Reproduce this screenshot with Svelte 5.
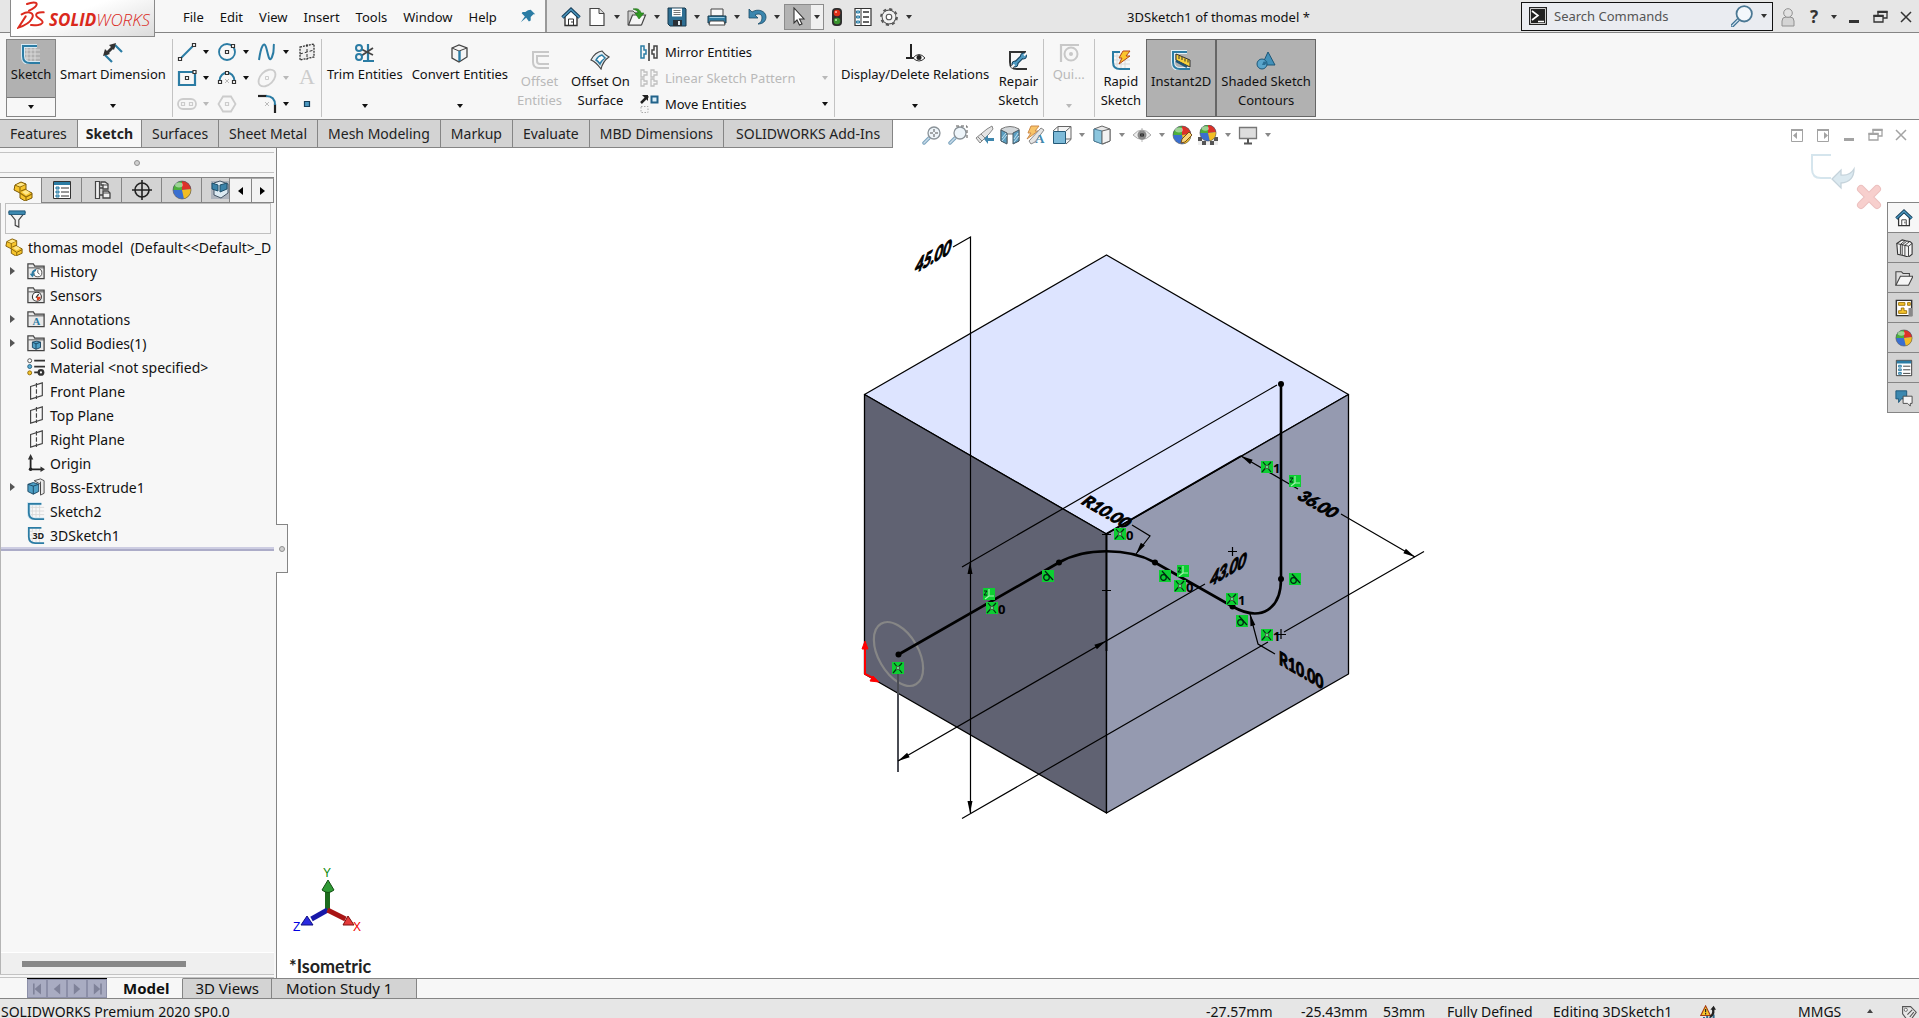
<script lang="ts">
	type Cmd = { icon: string; lines: string[]; menu?: boolean; off?: boolean; on?: boolean };
	type Node = { icon: string; label: string; open?: boolean };

	const B = '#2b7ca4';
	const K = '#333';

	const ball =
		'<circle cx="10" cy="10" r="9" fill="#3a6fd0"/><path d="M10 10V1a9 9 0 0 0-9 9z" fill="#4caf3c"/><path d="M10 10V1a9 9 0 0 1 9 8z" fill="#dc3228"/><path d="M10 10l9-1a9 9 0 0 1-7 10z" fill="#f3bd22"/><circle cx="10" cy="10" r="9" fill="none" stroke="#555" stroke-opacity=".6"/><ellipse cx="7" cy="5" rx="4" ry="2.4" fill="#fff" opacity=".45"/>';
	const folder =
		'<path d="M1 18.500V2h6l1.500 2.500H19v14z" fill="#e9e9e9" stroke="#444" stroke-width="1.400"/><path d="M1.500 6.500H19" stroke="#444"/>';
	const grid = '<path d="M6 3v15M10 3v15M14 3v15M3 6h16M3 10h16M3 14h16" stroke="#d9d9d9"/>';
	const plane =
		'<path d="M4 5l13-4v14L4 19z" fill="#f9f9f9" stroke="#444" stroke-width="1.300"/><path d="M10.500 1v18" stroke="#444" stroke-width="1.300" stroke-dasharray="5 2"/>';
	const part =
		'<path d="M1 9l1-5 6-3 5 2v6l6 3v5l-7 3-5-3v-5z" fill="#f7c52c" stroke="#7a5806"/><path d="M2 4l5 2v6M7 6l6-3M8 10l5-2M7 12l6 4 6-3M13 16v3" fill="none" stroke="#8f690a" stroke-width="1.100"/><path d="M3 4l5-2 4 1.500-5 2z" fill="#ffe88a"/><path d="M9 11l4-2 4 2.500-4 2.500z" fill="#ffe88a"/>';
	const list = `<path d="M1.500 1.500h17v17h-17z" fill="#fff" stroke="${K}"/><path d="M2 2h16v3H2z" fill="${B}"/><path d="M4 7h3v2H4zM4 11h3v2H4zM4 15h3v2H4z" fill="#9cc8de" stroke="${B}"/><path d="M9 8h8M9 12h8M9 16h8" stroke="${K}"/>`;
	const house = `<path d="M4 9v9.500h12V9l-6-6z" fill="#fff" stroke="${K}" stroke-width="1.400"/><path d="M7.500 18v-6h5v6M11 14v2" fill="none" stroke="${K}"/><path d="M1.500 10.500L10 2.500l8.500 8" fill="none" stroke="#173f5a" stroke-width="3.600"/><path d="M1.500 10.500L10 2.500l8.500 8" fill="none" stroke="#4b97bf" stroke-width="1.500"/>`;
	const lens =
		'<path d="M2 18l5-5" stroke="#7ba3bd" stroke-width="3.500" stroke-linecap="round"/><path d="M2 18l5-5" stroke="#c8dcea" stroke-width="1.500" stroke-linecap="round"/><circle cx="12" cy="8" r="6" fill="#eef5fa" stroke="#8a9298" stroke-width="1.300"/>';
	const offset = (c: string) =>
		`<path d="M19 2H3v10q0 6 6 6h10M19 6H7v5q0 3 3 3h9" fill="none" stroke="${c}" stroke-width="2"/>`;

	const icons: Record<string, string> = {
		pin: `<path d="M13 3l5 5-2 0-3 3 0 4-2 1-3-4-6 5 4.500-6.500-3.500-3.500 1-1.500 3 0 3-2z" fill="${B}"/>`,
		home: house,
		doc: '<path d="M3 1.500h9l5 5v12H3z" fill="#fdfdfd" stroke="#444" stroke-width="1.200"/><path d="M12 1.500v5h5" fill="#ddd" stroke="#444"/>',
		open: '<path d="M1 18V4h5l2 2h6v12z" fill="#ccc" stroke="#555"/><path d="M1.500 18l4-10h13l-4 10z" fill="#f5f5f5" stroke="#444" stroke-width="1.200"/><path d="M6 2c4-1 7 0 8 4l3 0-5 6-4-6h3c0-2-2-3-5-4z" fill="#2f9a22" stroke="#1d6b14" stroke-width=".6"/>',
		save: '<path d="M1 1h17l1 1v17H3l-2-2z" fill="#2f6f93" stroke="#16384c"/><path d="M5 1.500h10v8H5z" fill="#fff"/><path d="M6.500 3.500h7M6.500 5.500h7M6.500 7.500h7" stroke="#777"/><path d="M6 13h9v6H6z" fill="#2a3036"/><path d="M11 14h2v4h-2z" fill="#dfe8ee"/>',
		print: `<path d="M4 9V2h12v7z" fill="#f8f8f8" stroke="#444"/><path d="M1 9h18v7H1z" fill="#2f7da4" stroke="#17384b"/><path d="M3 14h14l1 4H2z" fill="#fff" stroke="#444"/><path d="M2.500 10.500h15" stroke="#9ccbe2"/>`,
		undo: '<path d="M2 2v9h9L8 8c4-2 7-1 7 3 0 3-2 5-4 6 5 0 8-3 8-7 0-6-8-9-14-5z" fill="#3b86ae" stroke="#1b4a66" stroke-width=".8"/>',
		cursor: '<path d="M6 1v15l3-3 2.500 5 2.500-1-2.500-5h4.500z" fill="#fff" stroke="#333" stroke-width="1.100"/>',
		traffic: '<rect x="5" y="1" width="10" height="18" rx="4" fill="#2d2d2d"/><circle cx="10" cy="6" r="3.300" fill="#dd3018"/><circle cx="10" cy="14" r="3.300" fill="#39932e"/><circle cx="9" cy="5" r="1" fill="#ffc0a8"/><circle cx="9" cy="13" r="1" fill="#c4eeb4"/>',
		options: `<path d="M2 1.500h16v17H2z" fill="#fff" stroke="${K}" stroke-width="1.200"/><path d="M8 2v16" stroke="${K}"/><path d="M3.500 4h3v2h-3zM3.500 9h3v2h-3zM3.500 14h3v2h-3z" fill="#9cc8de" stroke="${B}"/><path d="M10 5h6M10 10h6M10 15h6" stroke="${K}" stroke-width="1.300"/>`,
		gear: '<circle cx="10" cy="10" r="6.800" fill="none" stroke="#555" stroke-width="1.200"/><circle cx="10" cy="10" r="8" fill="none" stroke="#555" stroke-width="1.800" stroke-dasharray="3.140 3.140"/><circle cx="10" cy="10" r="6.300" fill="#f2f2f2"/><circle cx="10" cy="10" r="2.800" fill="#fff" stroke="#555" stroke-width="1.100"/>',
		prompt: '<path d="M1 1h18v18H1z" fill="#222"/><path d="M2.500 2.500h15v15h-15z" fill="none" stroke="#ccc"/><path d="M4 5l6 4.500L4 14M10 15.500h6" fill="none" stroke="#fff" stroke-width="1.600"/>',
		search: '<path d="M1 19l7-7" stroke="#3f7294" stroke-width="3.400" stroke-linecap="round"/><path d="M1 19l7-7" stroke="#cfe2ef" stroke-width="1.200" stroke-linecap="round"/><circle cx="12" cy="8" r="7" fill="#f3f7fb" stroke="#4b7894" stroke-width="1.600"/>',
		user: '<path d="M4 19v-5q0-4 4-4h4q4 0 4 4v5z" fill="#d4d4d4" stroke="#909090"/><circle cx="10" cy="6" r="4.300" fill="#e2e2e2" stroke="#909090"/>',
		min: '<path d="M5 13h10v3H5z" fill="currentColor"/>',
		restore: '<path d="M8 9V4.500h9V11h-4M4 8.500h9v6.500H4z" fill="none" stroke="currentColor" stroke-width="1.300"/><path d="M7.500 5h10M3.500 9h10" stroke="currentColor" stroke-width="2"/>',
		close: '<path d="M5 5l10 10M15 5L5 15" stroke="currentColor" stroke-width="1.500"/>',
		paneL: '<path d="M4.500 4.500h11v12h-11z" fill="none" stroke="currentColor"/><path d="M4 4h12v2H4zM10 7v7l-4-3.500z" fill="currentColor"/>',
		paneR: '<path d="M4.500 4.500h11v12h-11z" fill="none" stroke="currentColor"/><path d="M4 4h12v2H4zM11 7v7l4-3.500z" fill="currentColor"/>',
		sketch: `${grid}<path d="M16 2H2v10q0 7 7 7h10" fill="none" stroke="#d7e9f3" stroke-width="4"/><path d="M16 2H2v10q0 7 7 7h10" fill="none" stroke="${B}" stroke-width="2"/>`,
		smartdim: `<path d="M2 12l7 7M12 2l7 7" stroke="${B}" stroke-width="2.200"/><path d="M3 11L11 3" stroke="${K}" stroke-width="3"/><path d="M0 13l2-7 5 5zM13 0l-2 7-5-5z" fill="${K}"/>`,
		line: `<path d="M3 17L17 3" stroke="${B}" stroke-width="2"/><path d="M1.500 15.500h3v3h-3zM15.500 1.500h3v3h-3z" fill="#fff" stroke="${K}" stroke-width="1.200"/>`,
		circle: `<circle cx="10" cy="10" r="8" fill="none" stroke="${B}" stroke-width="1.800"/><path d="M8.500 8.500h3v3h-3zM14.500 2.500h3v3h-3z" fill="#fff" stroke="${K}" stroke-width="1.200"/>`,
		spline: `<path d="M2 18C4 4 7-1 9 5s3 17 6 10 1-9 2-13" fill="none" stroke="${B}" stroke-width="2"/>`,
		sketchplane: `<path d="M3 5l14-3v13L3 18z" fill="#efefef" stroke="${K}" stroke-width="1.300" stroke-dasharray="2 1"/><path d="M10 2v16M3 12l14-4" stroke="${K}" stroke-dasharray="3 2"/>`,
		rect: `<path d="M2 4h16v13H2z" fill="none" stroke="${B}" stroke-width="2.200"/><path d="M8.500 8.500h3v3h-3zM16 2.500h3v3h-3z" fill="#fff" stroke="${K}" stroke-width="1.200"/>`,
		arc: `<path d="M2.500 13C3 2 17 2 17.500 13" fill="none" stroke="${B}" stroke-width="2"/><path d="M1.500 12.500h3v3h-3zM15.500 12.500h3v3h-3zM8.500 3.500h3v3h-3z" fill="#fff" stroke="${K}" stroke-width="1.200"/><path d="M8 11l4 4M12 11l-4 4" stroke="#bbb"/>`,
		ellipse: '<ellipse cx="10" cy="10" rx="10" ry="6.500" transform="rotate(-45 10 10)" fill="none" stroke="#ccc" stroke-width="1.800"/><path d="M8.500 8.500h3v3h-3z" fill="none" stroke="#ccc"/>',
		slot: '<rect x="1" y="5" width="18" height="10" rx="5" fill="none" stroke="#ccc" stroke-width="1.800"/><path d="M4.500 8.500h3v3h-3zM12.500 8.500h3v3h-3z" fill="none" stroke="#ccc" stroke-width="1.200"/>',
		polygon: '<path d="M6 2.500h8l4.500 7.500-4.500 7.500H6L1.500 10z" fill="none" stroke="#ccc" stroke-width="1.800"/><path d="M8.500 8.500h3v3h-3z" fill="none" stroke="#ccc" stroke-width="1.200"/>',
		fillet: `<path d="M1 2h9" stroke="#222" stroke-width="2.200"/><path d="M18 10v9" stroke="#222" stroke-width="2.200"/><path d="M9 2q9 0 9 9" fill="none" stroke="${B}" stroke-width="2"/><path d="M8 8l4 4M12 8l-4 4" stroke="#bbb"/>`,
		point: '<path d="M7.500 7.500h5v5h-5z" fill="#4b97bf" stroke="#173f5a" stroke-width="1.200"/>',
		trim: `<path d="M13 1v17M8 18h11" stroke="${B}" stroke-width="2.200"/><path d="M6 6l12 6M6 13l12-8" stroke="#444" stroke-width="1.800"/><circle cx="4" cy="5" r="3" fill="none" stroke="${B}" stroke-width="2"/><circle cx="4" cy="14" r="3" fill="none" stroke="${B}" stroke-width="2"/>`,
		convert: `<path d="M2 5l7-3 8 3v9l-8 5-7-4z" fill="#f4f4f4" stroke="#444" stroke-width="1.300"/><path d="M2 5l7 3 8-3" fill="none" stroke="#444"/><path d="M9.500 8v10" stroke="${B}" stroke-width="2.400"/>`,
		offset: offset('#c8c8c8'),
		surface: `<path d="M1 10Q5 2 12 1q3 4 7 6-6 4-8 12Q6 12 1 10z" fill="#e6eef3" stroke="#444" stroke-width="1.200"/><path d="M6 10q2-4 6-5l3 3q-4 3-5 6-2-3-4-4z" fill="#fff" stroke="${B}" stroke-width="1.500"/>`,
		mirror: `<path d="M10 1v18" stroke="${K}" stroke-width="1.500"/><path d="M2 4h3v4h2v4H5v4H2z" fill="none" stroke="${B}" stroke-width="1.500"/><path d="M18 4h-3v4h-2v4h2v4h3z" fill="none" stroke="#444" stroke-width="1.500"/>`,
		pattern: '<path d="M2 2h3v2h3v3H5v2H2zM12 2h3v2h3v3h-3v2h-3zM2 11h3v2h3v3H5v2H2zM12 11h3v2h3v3h-3v2h-3z" fill="none" stroke="#c0c0c0" stroke-width="1.300"/>',
		move: `<path d="M2 9l7-7" stroke="#222" stroke-width="2.500"/><path d="M3 1h6v6z" fill="#222"/><path d="M12.500 2.500h6v6h-6z" fill="#d9eef9" stroke="#22638a" stroke-width="2"/><path d="M2 12.500h7v6H2z" fill="none" stroke="#aaa" stroke-dasharray="1.500 1.500"/>`,
		relations: '<path d="M6 1v14M1 15h8" stroke="#222" stroke-width="2"/><path d="M8 15q6-7 12 0-6 6-12 0z" fill="#fff" stroke="#333"/><circle cx="14" cy="14.500" r="2.500" fill="#222"/>',
		repair: `<path d="M18 2H2v10q0 7 7 7h10" fill="none" stroke="${K}" stroke-width="2"/><path d="M7 14l8-8" stroke="#17435f" stroke-width="4.500"/><circle cx="7" cy="14" r="3" fill="#4f9ac2" stroke="#17435f"/><circle cx="15.500" cy="6" r="3" fill="#4f9ac2" stroke="#17435f"/><path d="M7 14l8-8" stroke="#4f9ac2" stroke-width="2.200"/><path d="M16 5.500l3-3M6.500 14.500l-3 3" stroke="#f7f7f7" stroke-width="2"/>`,
		snaps: '<path d="M2 19V2h18" fill="none" stroke="#c8c8c8" stroke-width="2.200"/><circle cx="12" cy="11" r="6.500" fill="none" stroke="#c8c8c8" stroke-width="2"/><circle cx="12" cy="11" r="2" fill="#c8c8c8"/>',
		rapid: `${grid}<path d="M9 2H2v10q0 7 7 7h10" fill="none" stroke="${B}" stroke-width="2"/><path d="M12 1h7l-4 5h4L8 14l3-6H8z" fill="#fbc52b" stroke="#b5461c"/>`,
		instant: `<path d="M16 2H2v10q0 7 7 7h10" fill="none" stroke="#e3eff6" stroke-width="4"/><path d="M16 2H2v10q0 7 7 7h10" fill="none" stroke="${B}" stroke-width="2"/><path d="M5 4l14 6v7L5 10z" fill="#f7d23b" stroke="#333"/><path d="M8 6v3M11 7v3M14 8.500v3M17 9.500v3" stroke="#333"/><path d="M5 11l11 6" stroke="#1d5677" stroke-width="2"/>`,
		shaded: `<path d="M12 2l7 13H6z" fill="#4391b9" stroke="#1d5677"/><circle cx="6" cy="14" r="5" fill="#5aa5cb" stroke="#1d5677"/><path d="M7.500 11.500l4 .2-2.500 3.300h-3z" fill="#2b6f95"/>`,
		zoomfit: lens + '<path d="M12 4v8M8 8h8" stroke="#555" stroke-dasharray="3 2"/>',
		zoomarea: lens + '<path d="M8 1h11v13" fill="none" stroke="#555" stroke-dasharray="3 2"/>',
		prevview: `<path d="M2 13L13 4l5-3 1 3-4 5-9 9z" fill="#e4e4e4" stroke="#888"/><path d="M7 9l4 4M4 12l4 4" stroke="#888"/><path d="M10 14l4-4v3h6v3h-6v3z" fill="#3f87ad"/>`,
		section: `<path d="M1 4q9-5 18 0v12l-5 2V9H7v9l-6-2z" fill="#d3d7da" stroke="#777"/><path d="M1 5l6 3v11l-6-3zM13 8l6-3v11l-6 3z" fill="#5a9fc2" stroke="#4a5a64"/><path d="M2 13l4-5M2 16l5-6M14 14l4-6M14 17l5-6" stroke="#c5e0ee"/>`,
		annot: '<path d="M5 1h8L9 6h3L1 14l4-6H2z" fill="#f8c468" stroke="#cc8a4a"/><path d="M3 16L15 3l3 2-9 12-4 2z" fill="#e4e4e4" stroke="#888"/><text x="9" y="18" font-family="Liberation Serif, serif" font-weight="700" font-size="13" fill="#3f87ad">A</text>',
		orient: '<path d="M6 1.500h13v13L14 19M6 1.500L1 6M19 1.500L14 6M6 2v5M6 14h13" fill="#f4f4f4" stroke="#666"/><path d="M1.500 6.500h12v12h-12z" fill="#7dbad8" stroke="#245a78"/>',
		display: '<path d="M2 4l8-3 8 3v12l-7 3-9-3z" fill="#e8e8e8" stroke="#666"/><path d="M2 4l8 2v13l-8-3z" fill="#8cc6de" stroke="#4b7d98"/><path d="M10 6l8-2v12l-8 3z" fill="#f2f2f2" stroke="#666"/>',
		eye: '<path d="M1 10q9-10 18 0-9 9-18 0z" fill="#eee" stroke="#aaa"/><circle cx="10" cy="10" r="4.500" fill="#888"/><circle cx="10" cy="10" r="2" fill="#222"/><path d="M10 3v14" stroke="#999" stroke-width=".7"/>',
		appear: ball + '<path d="M9 18l1-4 7-7 3 3-7 7z" fill="#f8d67a" stroke="#7a4d18"/>',
		scene: '<path d="M0 12h20v8H0z" fill="#eee"/><path d="M0 12h4v4H0zM8 12h4v4H8zM16 12h4v4h-4zM4 16h4v4H4zM12 16h4v4h-4z" fill="#555"/><g transform="translate(1 -1) scale(.9)">' + ball + '</g>',
		monitor: '<path d="M1.500 2.500h17v11h-17z" fill="#ddd" stroke="#777" stroke-width="1.300"/><path d="M10 14v4M6 18.500h8" stroke="#555" stroke-width="2"/>',
		part,
		list,
		config: '<path d="M3.500 1.500h4v17h-4z" fill="#eee" stroke="#444" stroke-width="1.200"/><path d="M7 8h4M7 15h4" stroke="#444" stroke-width="1.500"/><path d="M9 2h4l3 2v5h-5V5H9zM11 11h5l2 2v5h-7z" fill="#eee" stroke="#444" stroke-width="1.300"/><path d="M11 5h5M11 13h7" stroke="#444"/>',
		target: '<circle cx="10" cy="10" r="7" fill="none" stroke="#222" stroke-width="1.600"/><path d="M10 0v20M0 10h20" stroke="#222" stroke-width="1.600"/>',
		ball,
		cam: '<path d="M1 1h18v18H1z" fill="#aeb4bd"/><path d="M4 3l6-2 8 3v9l-7 5-7-3z" fill="#dceaf2" stroke="#456"/><path d="M2 3l6 2v6L2 9zM10 5l7-2v6l-7 3z" fill="#3b83a9" stroke="#1e4e69"/>',
		funnel: `<path d="M1.500 3h17l-6.500 8v8l-4-2v-6z" fill="#f2f2f2" stroke="#444" stroke-width="1.300"/><path d="M1 1h18v4H1z" fill="#3c88af" stroke="#1d5677"/>`,
		history: folder + `<circle cx="12" cy="12" r="4.500" fill="#fff" stroke="#444"/><path d="M12 9v3l2 1.500" fill="none" stroke="#444"/><path d="M10 8q-5 1-5 5H3l3 4 3-4H7q0-2 3-3z" fill="${B}"/>`,
		sensors: folder + '<circle cx="11" cy="12" r="5" fill="#fff" stroke="#333" stroke-width="1.200"/><path d="M10 13l3-4" stroke="#333" stroke-width="1.500"/><path d="M11 12h4q0 4-4 4z" fill="#e0401f"/>',
		annotations: folder + `<text x="6" y="17" font-family="Liberation Serif, serif" font-weight="700" font-size="12" fill="${B}">A</text>`,
		bodies: folder + '<path d="M6 9l5-1 4 1v6l-5 2-4-2z" fill="#4ea0c6" stroke="#17435f"/><path d="M6 9l4 2 5-2M10 11v6" fill="none" stroke="#17435f"/>',
		material: '<path d="M8 3h12M8 9.500h12M8 16h6" stroke="#333" stroke-width="1.900"/><circle cx="3" cy="3" r="2.200" fill="#fff" stroke="#444"/><circle cx="3" cy="9.500" r="2.200" fill="#5ab0d8" stroke="#245a78"/><circle cx="3" cy="16.500" r="2.200" fill="#f5c52b" stroke="#8a6508"/><circle cx="15.500" cy="16" r="3.800" fill="#333"/><circle cx="15.500" cy="16" r="1.200" fill="#fff"/>',
		plane,
		origin: '<path d="M4 3v14h13" fill="none" stroke="#222" stroke-width="2"/><path d="M1 6l3-6 3 6zM15 14l5 3-5 3z" fill="#333"/><circle cx="4" cy="17" r="2" fill="#222"/>',
		extrude: '<path d="M8 3l7-2 4 2v14l-4 2V7z" fill="#e9e9e9" stroke="#444"/><path d="M15 4v14" stroke="#444"/><path d="M1 7l6-2 6 2v8l-6 3-6-3z" fill="#4ea0c6" stroke="#17435f"/><path d="M1 7l6 2 6-2M7 9v9" fill="none" stroke="#17435f"/>',
		sketch3d: `${grid}<path d="M16 2H2v10q0 7 7 7h10" fill="none" stroke="${B}" stroke-width="2"/><path d="M6 6h13v9H6z" fill="#f7f7f7"/><text x="6" y="14" font-family="Noto Sans, sans-serif" font-weight="700" font-size="10" fill="#222">3D</text>`,
		books: '<path d="M2 5l6-4 4 1 5 1 2 2v12l-4 3-4-1-3-1-5-1z" fill="#f3f3f3" stroke="#333" stroke-width="1.200"/><path d="M2 5l4 1v11M6 6l5-4M8 6.500l5-4M8 6v12M11 7l5-4M11 7v12M15 8l4-3M15 8v11M6 6l9 2" fill="none" stroke="#333"/>',
		folderopen: '<path d="M1 18V3h6l2 2h7v4" fill="#ddd" stroke="#444" stroke-width="1.200"/><path d="M1 18L6 8h14l-5 10z" fill="#f5f5f5" stroke="#444" stroke-width="1.200"/>',
		palette: '<path d="M1.500 1.500h17v17h-17z" fill="#fff" stroke="#333" stroke-width="1.600"/><path d="M4 4h7v3H4zM14 4h3v3h-3zM4 13h3v-3h3v3h3v3H4z" fill="#f7c52c" stroke="#9a7208"/><path d="M15 10h4v9h-4z" fill="#888"/>',
		forum: `<path d="M1 2h12v9H7l-3 4v-4H1z" fill="#3c88af" stroke="#1d5677"/><path d="M9 8h10v8h-2v3l-3-3H9z" fill="#f4f4f4" stroke="#444"/>`,
		rebuild: '<path d="M5 15v4M9 13v6M13 15v4M17 12v7" stroke="#2d6b90" stroke-width="2.500"/><path d="M7 1l6 12H1z" fill="#f8c52c" stroke="#a33a12" stroke-width="1.300"/><path d="M7 5v4M7 10v2" stroke="#222" stroke-width="1.500"/><path d="M12 14q4-3 3-8h-2l4-5 3 5h-2q1 8-6 10z" fill="#222"/>',
		tag: '<path d="M2 2l10 0 7 7-7 10-4 0-6-8z" fill="#e8e8e8" stroke="#555" stroke-width="1.400"/><circle cx="6" cy="6" r="2" fill="#fff" stroke="#555"/><path d="M8 12l6-6M11 15l5-6" stroke="#555" stroke-width="1.400"/>',
		first: '<path d="M6 3v14" stroke="currentColor" stroke-width="2"/><path d="M15 3v14l-8-7z" fill="currentColor"/>',
		prev: '<path d="M14 3v14l-8-7z" fill="currentColor"/>',
		next: '<path d="M6 3v14l8-7z" fill="currentColor"/>',
		last: '<path d="M15 3v14" stroke="currentColor" stroke-width="2"/><path d="M6 3v14l8-7z" fill="currentColor"/>'
	};

	const menus = ['File', 'Edit', 'View', 'Insert', 'Tools', 'Window', 'Help'];
	const quick = ['home', 'doc', '|', 'open', '|', 'save', '|', 'print', '|', 'undo', '|'];
	const headsUp = [
		'zoomfit', 'zoomarea', 'prevview', 'section', 'annot', 'orient', '|', 'display', '|',
		'eye', '|', 'appear', 'scene', '|', 'monitor', '|'
	];
	const shapes = [
		['line', 'circle', 'spline', 'sketchplane'],
		['rect', 'arc', 'ellipse', 'text'],
		['slot', 'polygon', 'fillet', 'point']
	];
	const noMenu = ['sketchplane', 'text', 'point', 'polygon'];
	const disabled = ['ellipse', 'text', 'slot', 'polygon'];

	const edits: Cmd[] = [
		{ icon: 'trim', lines: ['Trim Entities'], menu: true },
		{ icon: 'convert', lines: ['Convert Entities'], menu: true },
		{ icon: 'offset', lines: ['Offset', 'Entities'], off: true },
		{ icon: 'surface', lines: ['Offset On', 'Surface'] }
	];
	const rows = [
		{ icon: 'mirror', label: 'Mirror Entities' },
		{ icon: 'pattern', label: 'Linear Sketch Pattern', off: true, menu: true },
		{ icon: 'move', label: 'Move Entities', menu: true }
	];
	const tabs = [
		'Features', 'Sketch', 'Surfaces', 'Sheet Metal', 'Mesh Modeling', 'Markup', 'Evaluate',
		'MBD Dimensions', 'SOLIDWORKS Add-Ins'
	];
	const tree: Node[] = [
		{ icon: 'history', label: 'History', open: true },
		{ icon: 'sensors', label: 'Sensors' },
		{ icon: 'annotations', label: 'Annotations', open: true },
		{ icon: 'bodies', label: 'Solid Bodies(1)', open: true },
		{ icon: 'material', label: 'Material <not specified>' },
		{ icon: 'plane', label: 'Front Plane' },
		{ icon: 'plane', label: 'Top Plane' },
		{ icon: 'plane', label: 'Right Plane' },
		{ icon: 'origin', label: 'Origin' },
		{ icon: 'extrude', label: 'Boss-Extrude1', open: true },
		{ icon: 'sketch', label: 'Sketch2' },
		{ icon: 'sketch3d', label: '3DSketch1' }
	];

	// sketch relation flags: x, y, kind, index
	const flags: [number, number, string, string][] = [
		[1261, 461, 'x', '1'],
		[1289, 475, 'l', ''],
		[1114, 528, 'x', '0'],
		[1159, 570, 't', ''],
		[1177, 565, 'l', ''],
		[1174, 580, 'x', '0'],
		[1226, 593, 'x', '1'],
		[1236, 615, 't', ''],
		[1289, 573, 't', ''],
		[1261, 629, 'x', '1'],
		[1042, 570, 't', ''],
		[983, 588, 'l', ''],
		[986, 602, 'x', '0'],
		[892, 662, 'x', '']
	];
	// dimension arrow heads: x, y, angle
	const heads = [
		[970, 562, -90], [970, 813, 90], [1241, 456, 210], [1415, 557, 30],
		[898, 761, 150], [1106, 641, -30], [1136, 554, 125], [1250, 614, -104]
	];

	let activeTab = $state('Sketch');
</script>

{#snippet icon(name: string, size = 20)}
	<svg class="ico" width={size} height={size} viewBox="0 0 20 20" aria-hidden="true">{@html icons[name]}</svg>
{/snippet}

{#snippet caret()}
	<svg class="caret" width="6" height="4" viewBox="0 0 6 4" aria-hidden="true"><path d="M0 0h6L3 4z" fill="currentColor" /></svg>
{/snippet}

{#snippet tool(name: string)}
	{#if name === '|'}
		<button class="drop" aria-label="More">{@render caret()}</button>
	{:else}
		<button class="tool" aria-label={name}>{@render icon(name)}</button>
	{/if}
{/snippet}

{#snippet command(c: Cmd)}
	<button class="cmd" class:tall={!c.menu} class:on={c.on} disabled={c.off}>
		{@render icon(c.icon)}
		<span class="lbl">{#each c.lines as l}<span>{l}</span>{/each}</span>
		{#if c.menu}<span class="more">{@render caret()}</span>{/if}
	</button>
{/snippet}

<div class="app">
	<header class="title">
		<div class="brandbar">
			<div class="brand">
				<svg width="28" height="28" viewBox="48 4 84 84" aria-hidden="true">
					<g fill="none" stroke="#dc2a1e" stroke-linecap="round">
						<path d="M78 13C92 7 108 6 107 14 106 21 96 27 84 33" stroke-width="6" />
						<path d="M62 44C84 32 102 40 93 56 86 70 70 78 52 84L74 50" stroke-width="6" />
						<path d="M128 38C110 37 102 42 107 50 114 58 129 62 124 70 118 78 106 77 90 76" stroke-width="6" />
					</g>
				</svg>
				<span class="word"><b>SOLID</b><i>WORKS</i></span>
			</div>
			<nav class="menus">
				{#each menus as m}<button>{m}</button>{/each}
			</nav>
			<button class="tool pin" aria-label="Pin menu">{@render icon('pin', 18)}</button>
		</div>
		<div class="tools quick">
			{#each quick as q}{@render tool(q)}{/each}
			<span class="select">
				<button class="tool" aria-label="Select">{@render icon('cursor')}</button>
				<button class="drop" aria-label="Select options">{@render caret()}</button>
			</span>
			{#each ['traffic', 'options', 'gear', '|'] as q}{@render tool(q)}{/each}
		</div>
		<h1>3DSketch1 of thomas model *</h1>
		<div class="search">
			{@render icon('prompt')}
			<input type="text" placeholder="Search Commands" aria-label="Search Commands" />
			<button class="find" aria-label="Search">{@render icon('search', 22)}</button>
			<button class="drop" aria-label="Search scope">{@render caret()}</button>
		</div>
		<div class="tools win">
			{@render tool('user')}
			<button class="tool help" aria-label="Help">?</button>
			{@render tool('|')}
			{@render tool('min')}
			{@render tool('restore')}
			{@render tool('close')}
		</div>
	</header>

	<div class="ribbon">
		<div class="split">
			<button class="main">{@render icon('sketch')}<span>Sketch</span></button>
			<button class="more" aria-label="Sketch options">{@render caret()}</button>
		</div>
		{@render command({ icon: 'smartdim', lines: ['Smart Dimension'], menu: true })}
		<div class="shapes">
			{#each shapes as row}
				{#each row as s}
					<span class="cell">
						<button class="shape" aria-label={s} disabled={disabled.includes(s)}>
							{#if s === 'text'}<span class="glyph">A</span>{:else}{@render icon(s)}{/if}
						</button>
						{#if !noMenu.includes(s)}
							<button class="arrow" aria-label="{s} options" disabled={disabled.includes(s)}>{@render caret()}</button>
						{/if}
					</span>
				{/each}
			{/each}
		</div>
		<div class="group edits">
			{#each edits as c}{@render command(c)}{/each}
			<div class="rows">
				{#each rows as r}
					<button disabled={r.off}>
						{@render icon(r.icon)}<span>{r.label}</span>
						{#if r.menu}{@render caret()}{/if}
					</button>
				{/each}
			</div>
		</div>
		<div class="group rel">
			{@render command({ icon: 'relations', lines: ['Display/Delete Relations'], menu: true })}
			{@render command({ icon: 'repair', lines: ['Repair', 'Sketch'] })}
		</div>
		<div class="group qs">{@render command({ icon: 'snaps', lines: ['Qui...'], menu: true, off: true })}</div>
		<div class="rapid">{@render command({ icon: 'rapid', lines: ['Rapid', 'Sketch'] })}</div>
		{@render command({ icon: 'instant', lines: ['Instant2D'], on: true })}
		{@render command({ icon: 'shaded', lines: ['Shaded Sketch', 'Contours'], on: true })}
	</div>

	<div class="tabline">
		<div class="tabs" role="tablist">
			{#each tabs as t}
				<button role="tab" aria-selected={activeTab === t} class:active={activeTab === t} onclick={() => (activeTab = t)}>{t}</button>
			{/each}
		</div>
		<div class="tools view">{#each headsUp as h}{@render tool(h)}{/each}</div>
		<div class="tools doc">{#each ['paneL', 'paneR', 'min', 'restore', 'close'] as d}{@render tool(d)}{/each}</div>
	</div>

	<div class="work">
		<aside>
			<div class="grip"><i class="dot"></i></div>
			<div class="panes">
				{#each ['part', 'list', 'config', 'target', 'ball'] as p, i}
					<button class:active={i === 0} aria-label={p}>{@render icon(p)}</button>
				{/each}
				<button class="cut" aria-label="cam">{@render icon('cam')}</button>
				<button class="spin" aria-label="Scroll left"><svg width="5" height="8" viewBox="0 0 5 8"><path d="M5 0v8L0 4z" /></svg></button>
				<button class="spin" aria-label="Scroll right"><svg width="5" height="8" viewBox="0 0 5 8"><path d="M0 0v8l5-4z" /></svg></button>
			</div>
			<div class="treebox">
				<div class="filter">{@render icon('funnel', 18)}</div>
				<div class="root">{@render icon('part', 18)}<span>thomas model&nbsp; (Default&lt;&lt;Default&gt;_D</span></div>
				<ul>
					{#each tree as n}
						<li>
							<span class="exp">
								{#if n.open}<svg width="5" height="8" viewBox="0 0 5 8"><path d="M0 0v8l5-4z" fill="#555" /></svg>{/if}
							</span>
							{@render icon(n.icon, 18)}<span>{n.label}</span>
						</li>
					{/each}
				</ul>
				<div class="rollback"></div>
				<div class="hscroll"><i></i></div>
			</div>
			<div class="foot"></div>
			<button class="handle" aria-label="Collapse panel"><i class="dot"></i></button>
		</aside>

		<main>
			<svg class="scene" viewBox="277 148 1642 830">
				<g stroke="#000" stroke-width="1.300" stroke-linejoin="round">
					<path d="M1106.500 255l242 139.500-242 139.500-242-139.500z" fill="#dde4ff" />
					<path d="M864.500 394.500L1106.500 534v279L864.500 674z" fill="#606272" />
					<path d="M1348.500 394.500L1106.500 534v279l242-139z" fill="#959ab0" />
				</g>
				<ellipse cx="898.500" cy="654" rx="35" ry="20" transform="rotate(60 898.500 654)" fill="none" stroke="#868686" stroke-width="2.200" />
				<path d="M898 662v110" stroke="#4a4c54" stroke-width="2" />
				<g fill="none" stroke="#000" stroke-width="1.200">
					<path d="M953 247l17.500-10v576" />
					<path d="M962 567L1277 385M962 818.500L1268 642M1284 632l140-80.500" />
					<path d="M1241 456l57 33M1341 514l74 43M898 761L1205 584" />
					<path d="M1132 525l18 11-14 18M1275 654l-17-10-8-30" />
					<path d="M1228 551.500h9M1232.500 547v9M1276 634.500h10M1281 629v10M1102 534.500h9M1102 590.500h9" />
				</g>
				<path d="M1106.500 534v117M1106 534L1241 456" stroke="#000" stroke-width="1.800" />
				<path d="M898.500 654.500L1059 562.500C1085 547.500 1128 547.500 1155 562.500L1232.500 606.500C1262 623 1281 608 1281 579V384" fill="none" stroke="#000" stroke-width="2.600" />
				{#each [[898.500, 654.500], [1059, 562.500], [1155, 562.500], [1232.500, 606.500], [1281, 579], [1281, 384]] as [x, y]}
					<circle cx={x} cy={y} r="3" />
				{/each}
				{#each heads as [x, y, a]}
					<path d="M0 0l-12-2.500v5z" transform="translate({x} {y}) rotate({a})" />
				{/each}
				<g fill="#f00" stroke="#f00">
					<path d="M865 646v28l8 4" fill="none" stroke-width="2" />
					<path d="M865 641l3 8h-6zM879 682l-9-1 3-5z" />
				</g>
				{#each flags as [x, y, kind, n]}
					<g transform="translate({x} {y})">
						<rect width="12" height="12" fill="#0dce32" />
						{#if kind === 'x'}
							<path d="M2 1l8 10M10 1L1 11" stroke="#031" stroke-width="1.200" />
							<rect x="4.500" y="4.500" width="3" height="3" fill="#6d8" stroke="#464" />
						{:else if kind === 't'}
							<circle cx="4.500" cy="7.500" r="2.800" fill="none" stroke="#021" stroke-width="1.200" />
							<path d="M3 1l8 9" stroke="#021" stroke-width="1.200" />
						{:else}
							<path d="M6 1v7h5M2 11l4-3" fill="none" stroke="#a5f0ae" stroke-width="1.200" />
							<path d="M1 3h3L1 7h3" fill="none" stroke="#021" />
						{/if}
						{#if n}<text class="idx" x="12" y="12">{n}</text>{/if}
					</g>
				{/each}
				<g class="dims">
					<text transform="translate(914 274) rotate(-30) skewX(-43)">45.00</text>
					<text transform="translate(1209 587) rotate(-30) skewX(-43)">43.00</text>
					<text transform="translate(1296 498) rotate(30) skewX(-20)">36.00</text>
					<text transform="translate(1080 503) rotate(30) skewX(-20)">R10.00</text>
					<text transform="translate(1279 664) rotate(30) skewX(30)">R10.00</text>
				</g>
				<g class="triad">
					<path d="M327.500 910v-20" stroke="#1d6b1d" stroke-width="5" />
					<path d="M328 880l6 10q-6 5-12 0z" fill="#2f9a35" stroke="#145014" />
					<path d="M327.500 910l-16 9" stroke="#1818a8" stroke-width="5" />
					<path d="M301 925l6-9 6 9z" fill="#2a2ae0" stroke="#101080" />
					<path d="M327.500 910l18 9" stroke="#a81414" stroke-width="5" />
					<path d="M354 925l-11 0 5-9z" fill="#e43a3a" stroke="#801010" />
					<text x="323" y="877" fill="#0a8a0a">Y</text>
					<text x="353" y="931" fill="#f00000">X</text>
					<text x="293" y="931" fill="#0000e0">Z</text>
				</g>
				<text class="iso" x="289" y="973">*Isometric</text>
			</svg>
			<div class="confirm">
				<button aria-label="Exit sketch">
					<svg width="46" height="38" viewBox="0 0 46 38">
						<path d="M21 2H2v14q0 9 9 9h10" fill="none" stroke="#d5e5ed" stroke-width="2" />
						<path d="M22 26l9-9v5q9 1 13-6 0 13-13 14v5z" fill="#dbe9f0" stroke="#c5d3db" stroke-width="1.300" />
					</svg>
				</button>
				<button class="cancel" aria-label="Cancel sketch">
					<svg width="26" height="26" viewBox="0 0 26 26">
						<path d="M5 5l16 16M21 5L5 21" stroke="#ecc0bf" stroke-width="8" stroke-linecap="round" />
						<path d="M5 5l16 16M21 5L5 21" stroke="#f7cfcd" stroke-width="6" stroke-linecap="round" />
					</svg>
				</button>
			</div>
			<div class="tasks">
				{#each ['home', 'books', 'folderopen', 'palette', 'ball', 'list', 'forum'] as t, i}
					<button class:active={i === 0} aria-label={t}>{@render icon(t, 18)}</button>
				{/each}
			</div>
		</main>
	</div>

	<div class="sheets">
		<div class="nav">
			{#each ['first', 'prev', 'next', 'last'] as n}<button aria-label={n}>{@render icon(n, 16)}</button>{/each}
		</div>
		<button class="active">Model</button>
		<button>3D Views</button>
		<button class="wide">Motion Study 1</button>
		<span class="rest"></span>
	</div>
	<footer>
		<span class="grow">SOLIDWORKS Premium 2020 SP0.0</span>
		<span class="c1">-27.57mm</span>
		<span class="c2">-25.43mm</span>
		<span class="c3">53mm</span>
		<span class="c4">Fully Defined</span>
		<span class="c5">Editing 3DSketch1</span>
		<span class="c6">{@render icon('rebuild', 16)}</span>
		<span class="c7">MMGS</span>
		<span class="c8"><svg width="6" height="4" viewBox="0 0 6 4"><path d="M0 4h6L3 0z" fill="#444" /></svg></span>
		{@render icon('tag', 16)}
	</footer>
</div>

<style>
	:global(body) {
		overflow: hidden;
	}
	.app {
		display: flex;
		flex-direction: column;
		height: 100vh;
		background: #fff;
		color: #111;
		font: 14px/19px 'Noto Sans', 'Open Sans', sans-serif;
	}
	.app * {
		box-sizing: border-box;
	}
	button {
		margin: 0;
		padding: 0;
		border: 0;
		background: none;
		color: inherit;
		font: inherit;
		white-space: nowrap;
	}
	button:disabled {
		color: #b9b9b9;
	}
	svg {
		display: block;
		flex: none;
	}
	.tools,
	.select {
		display: flex;
		align-items: center;
	}
	.tool {
		display: grid;
		place-items: center;
		width: 26px;
		height: 26px;
	}
	.drop {
		display: grid;
		place-items: center;
		width: 14px;
		height: 26px;
		color: #333;
	}

	/* title bar */
	.title {
		position: relative;
		z-index: 2;
		display: flex;
		align-items: center;
		height: 33px;
		flex: none;
		border-bottom: 1px solid #858585;
		background: #e6e6e6;
		font-size: 13px;
	}
	.brandbar {
		display: flex;
		align-items: center;
		height: 100%;
		padding: 0 4px 0 10px;
		border-right: 2px solid #999;
		background: linear-gradient(90deg, #e6e6e6 10px, #f7f7f7 10px);
	}
	.brand {
		display: flex;
		align-items: flex-start;
		align-self: flex-start;
		gap: 4px;
		width: 145px;
		height: 37px;
		padding: 1px 0 0 6px;
		border: 1px solid #8a8a8a;
		border-top: 0;
		background: linear-gradient(160deg, #fff 40%, #dcdcdc);
	}
	.word {
		padding-top: 7px;
		color: #da291c;
		font: italic 17px/24px 'Open Sans', sans-serif;
	}
	.word i {
		font-weight: 300;
	}
	.menus {
		display: flex;
		gap: 16px;
		padding: 2px 0 0 28px;
	}
	.pin {
		margin-left: 18px;
	}
	.quick {
		padding: 1px 0 0 11px;
	}
	.select {
		border: 1px solid #8c8c8c;
		background: #f0f0f0;
	}
	.select .tool {
		background: #b3b3b3;
		height: 24px;
	}
	.select .drop {
		width: 12px;
		height: 24px;
	}
	h1 {
		flex: 1;
		margin: 0;
		padding-top: 2px;
		font: inherit;
		text-align: center;
	}
	.search {
		display: flex;
		align-items: center;
		width: 252px;
		height: 29px;
		margin-right: 2px;
		padding: 0 1px 0 6px;
		border: 1px solid #111;
		background: #eaecf1;
	}
	.search input {
		flex: 1;
		min-width: 0;
		padding: 0 0 0 6px;
		border: 0;
		background: none;
		font: 13px/19px 'Noto Sans', sans-serif;
	}
	.search input::placeholder {
		color: #555;
		opacity: 1;
	}
	.find {
		margin-right: 4px;
	}
	.win {
		padding-top: 1px;
		color: #333;
	}
	.help {
		font-size: 17px;
		font-weight: 700;
	}

	/* command ribbon */
	.ribbon {
		display: flex;
		align-items: flex-start;
		height: 87px;
		flex: none;
		padding: 6px 0 0 6px;
		border-bottom: 1px solid #858585;
		background: #f7f7f7;
		font-size: 13px;
	}
	.split {
		display: flex;
		flex-direction: column;
		width: 50px;
		height: 78px;
		margin-right: 4px;
		border: 1px solid #858585;
	}
	.split .main {
		display: flex;
		flex-direction: column;
		align-items: center;
		gap: 1px;
		height: 58px;
		padding-top: 4px;
		border-bottom: 1px solid #777;
		background: #b1b1b1;
	}
	.split .more {
		display: grid;
		place-items: center;
		flex: 1;
	}
	.cmd {
		display: flex;
		flex-direction: column;
		align-items: center;
		height: 78px;
		padding-top: 4px;
	}
	.cmd .lbl {
		display: flex;
		flex-direction: column;
		padding-top: 2px;
		text-align: center;
	}
	.cmd .more {
		margin-top: 20px;
	}
	.cmd.tall {
		padding-top: 11px;
	}
	.cmd.on {
		padding: 10px 4px 0;
		border: 1px solid #666;
		background: #b1b1b1;
	}
	.shapes {
		display: grid;
		grid-template-columns: repeat(3, 40px) 20px;
		grid-template-rows: repeat(3, 26px);
		margin-left: 6px;
		padding: 0 4px;
		border: solid #c3c3c3;
		border-width: 0 1px;
	}
	.cell {
		display: flex;
		align-items: center;
	}
	.arrow {
		width: 20px;
		padding-left: 6px;
	}
	.glyph {
		padding-left: 2px;
		font: 22px/20px 'Liberation Serif', serif;
		color: #ccc;
	}
	.group {
		display: flex;
		height: 78px;
		border-right: 1px solid #c3c3c3;
	}
	.edits {
		gap: 9px;
		padding: 0 6px 0 5px;
	}
	.rows {
		display: flex;
		flex-direction: column;
	}
	.rows button {
		display: flex;
		align-items: center;
		gap: 6px;
		height: 26px;
		min-width: 189px;
	}
	.rows .caret {
		margin-left: auto;
	}
	.rel {
		gap: 9px;
		padding: 0 4px 0 6px;
	}
	.qs {
		padding: 0 9px;
	}
	.rapid {
		padding: 0 5px 0 6px;
	}

	/* tabs and heads-up tools */
	.tabline {
		display: flex;
		height: 28px;
		flex: none;
	}
	.tabs {
		display: flex;
		border-bottom: 1px solid #858585;
	}
	.tabs button {
		padding: 0 10px;
		border-right: 1px solid #858585;
		background: #d3d3d3;
		color: #222;
	}
	.tabs button.active {
		padding: 0 8px;
		background: #f7f7f7;
		font-weight: 700;
	}
	.tabs button:last-child {
		padding: 0 12px;
	}
	.view {
		padding: 2px 0 0 26px;
	}
	.view .drop {
		color: #888;
	}
	.doc {
		margin-left: auto;
		padding: 2px 5px 0 0;
		color: #a3a3a3;
	}

	/* feature tree */
	.work {
		display: flex;
		flex: 1;
		min-height: 0;
	}
	aside {
		position: relative;
		display: flex;
		flex-direction: column;
		width: 277px;
		flex: none;
		padding-right: 2px;
		border-right: 1px solid #858585;
		background: #f7f7f7;
	}
	.dot {
		display: block;
		width: 6px;
		height: 6px;
		border: 1px solid #909090;
		border-radius: 50%;
		background: #d0d0d0;
	}
	.grip {
		display: grid;
		place-items: center;
		height: 21px;
		margin-top: 4px;
		border: solid #c3c3c3;
		border-width: 1px 0;
	}
	.panes {
		display: flex;
		height: 26px;
		margin-top: 4px;
		border-top: 1px solid #858585;
	}
	.panes button {
		display: grid;
		place-items: center;
		width: 40px;
		flex: none;
		border: solid #858585;
		border-width: 0 1px 1px 0;
		background: #d3d3d3;
	}
	.panes .active {
		width: 42px;
		padding-left: 4px;
		border-bottom: 0;
		background: #f7f7f7;
	}
	.panes .cut {
		width: 28px;
		padding-left: 8px;
		overflow: hidden;
	}
	.panes .spin {
		width: 22px;
		border-top: 1px solid #aaa;
		background: #f3f3f3;
	}
	.treebox {
		display: flex;
		flex-direction: column;
		flex: 1;
		min-height: 0;
		border-left: 1px solid #b5b5b5;
	}
	.filter {
		display: flex;
		align-items: center;
		height: 31px;
		margin: 0 3px 1px 4px;
		padding-left: 2px;
		border: 1px solid #c0c0c0;
	}
	.root,
	li {
		display: flex;
		align-items: center;
		gap: 5px;
		height: 24px;
		padding-left: 4px;
		white-space: nowrap;
	}
	ul {
		margin: 0;
		padding: 0;
		list-style: none;
	}
	li {
		padding-left: 9px;
	}
	.exp {
		width: 12px;
	}
	.rollback {
		height: 4px;
		border-bottom: 2px solid #acacc8;
		background: #cdcde2;
	}
	.hscroll {
		margin-top: auto;
		height: 22px;
		padding: 8px 0 0 21px;
		border-top: 1px solid #fff;
		background: #efefef;
	}
	.hscroll i {
		display: block;
		width: 65%;
		max-width: 164px;
		height: 6px;
		background: #888;
	}
	.foot {
		height: 4px;
		border: solid #c3c3c3;
		border-width: 1px 0;
	}
	.handle {
		position: absolute;
		z-index: 1;
		left: 100%;
		top: 376px;
		display: grid;
		place-items: center;
		width: 12px;
		height: 49px;
		border: 1px solid #858585;
		border-left: 0;
		background: #f7f7f7;
	}

	/* graphics area */
	main {
		position: relative;
		flex: 1;
		min-width: 0;
	}
	.scene {
		width: 100%;
		height: 100%;
	}
	.dims {
		font: 700 16px Lato, sans-serif;
		stroke: #000;
		stroke-width: 1px;
	}
	.idx {
		font: 700 13px 'Noto Sans', sans-serif;
	}
	.triad {
		font: 12px 'Liberation Sans', sans-serif;
	}
	.iso {
		font: 700 18px Lato, sans-serif;
		fill: #222;
	}
	.confirm {
		position: absolute;
		right: 37px;
		top: 5px;
		display: flex;
		flex-direction: column;
		width: 72px;
	}
	.cancel {
		align-self: flex-end;
		margin-top: -7px;
	}
	.tasks {
		position: absolute;
		right: 0;
		top: 54px;
		display: flex;
		flex-direction: column;
		width: 32px;
		border: solid #858585;
		border-width: 1px 0 0 1px;
	}
	.tasks button {
		display: grid;
		place-items: center;
		height: 30px;
		border-bottom: 1px solid #858585;
		background: #d3d3d3;
	}
	.tasks .active {
		background: #f7f7f7;
	}

	/* bottom bars */
	.sheets {
		display: flex;
		height: 21px;
		flex: none;
		border-bottom: 1px solid #858585;
		background: #f7f7f7;
		font-size: 15px;
	}
	.nav {
		display: flex;
		margin-left: 27px;
		border-top: 1px solid #000;
	}
	.nav button {
		display: grid;
		place-items: center;
		width: 20px;
		border: 1px solid #8c8fa8;
		background: #a9acc2;
		color: #7f8299;
	}
	.sheets > button {
		padding: 0 12px 2px;
		border: solid #858585;
		border-width: 1px 1px 0 0;
		background: #d3d3d3;
		line-height: 18px;
	}
	.sheets > .active {
		padding: 0 13px 2px 16px;
		border-top-color: #f7f7f7;
		background: #f7f7f7;
		font-weight: 700;
	}
	.sheets > .wide {
		padding: 0 24px 2px 14px;
	}
	.rest {
		flex: 1;
		border-top: 1px solid #858585;
	}
	footer {
		display: flex;
		height: 19px;
		flex: none;
		padding: 6px 2px 0 1px;
		background: #e6e6e6;
		line-height: 13px;
		white-space: nowrap;
	}
	.grow {
		flex: 1;
	}
	.c1 {
		width: 95px;
	}
	.c2 {
		width: 82px;
	}
	.c3 {
		width: 64px;
	}
	.c4 {
		width: 106px;
	}
	.c5 {
		width: 147px;
	}
	.c6 {
		width: 98px;
	}
	.c7 {
		width: 69px;
	}
	.c8 {
		width: 34px;
		padding-top: 4px;
	}
</style>
